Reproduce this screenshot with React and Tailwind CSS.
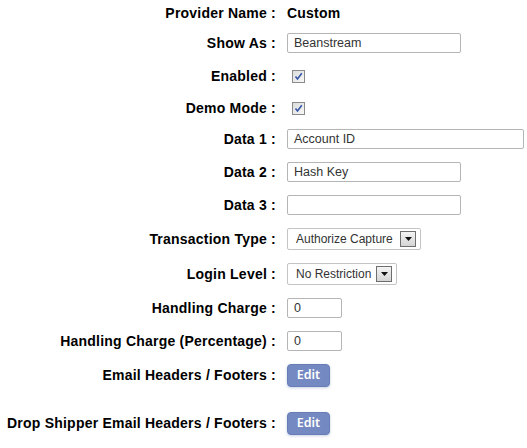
import React from "react";

const font = { fontFamily: '"Liberation Sans", Arial, sans-serif' };

function Label({ children }) {
  return (
    <div className="w-[276px] shrink-0 text-right text-[14px] tracking-[0.22px] font-bold text-black whitespace-nowrap">
      {children}
    </div>
  );
}

function Row({ h, label, children, extra = "" }) {
  return (
    <div className={`flex items-center ${h} ${extra}`}>
      <Label>{label}</Label>
      <div className="ml-[11px] flex items-center">{children}</div>
    </div>
  );
}

function TextInput({ w, value }) {
  return (
    <div
      className={`${w} h-[20px] border border-[#b5b5b5] rounded-[2px] bg-white flex items-center pl-[6px] text-[12.5px] text-[#333]`}
    >
      {value}
    </div>
  );
}

function Checkbox() {
  return (
    <div className="ml-[5px] w-[13px] h-[13px] border border-[#8a8a8a] bg-gradient-to-br from-[#dcdcdc] to-[#f8f8f8] flex items-center justify-center">
      <svg width="9" height="9" viewBox="0 0 9 9">
        <path d="M1.5 4.5 L3.5 7 L7.8 1.2" fill="none" stroke="#3555a5" strokeWidth="1.6" />
      </svg>
    </div>
  );
}

function Select({ w, value }) {
  return (
    <div
      className={`${w} h-[22px] border border-[#c4c4c4] rounded-[2px] bg-white flex items-center justify-between pl-[8px] pr-[4px] text-[12px] text-[#333]`}
    >
      <span className="whitespace-nowrap">{value}</span>
      <div className="w-[16px] h-[16px] shrink-0 border border-[#6e6e6e] bg-gradient-to-b from-[#f4f4f4] to-[#d4d4d4] flex items-center justify-center">
        <svg width="7" height="4" viewBox="0 0 7 4">
          <path d="M0 0 H7 L3.5 4 Z" fill="#111" />
        </svg>
      </div>
    </div>
  );
}

function EditButton() {
  return (
    <div
      className="w-[43px] h-[23px] rounded-[4px] bg-[#7489c1] border border-[#687db6] shadow-[0_1px_3px_rgba(100,120,180,0.35)] flex items-center justify-center text-white text-[12.5px] font-semibold"
      style={{ fontFamily: '"Noto Sans", "Open Sans", sans-serif' }}
    >
      Edit
    </div>
  );
}

export default function App() {
  return (
    <div className="w-[527px] h-[448px] bg-white overflow-hidden" style={font}>
      <Row h="h-[26px]" label="Provider Name :">
        <span className="text-[14px] tracking-[0.22px] font-bold text-black">Custom</span>
      </Row>
      <Row h="h-[34px]" label="Show As :">
        <TextInput w="w-[174px]" value="Beanstream" />
      </Row>
      <Row h="h-[32px]" label="Enabled :">
        <Checkbox />
      </Row>
      <Row h="h-[32px]" label="Demo Mode :">
        <Checkbox />
      </Row>
      <Row h="h-[30px]" label="Data 1 :">
        <TextInput w="w-[237px]" value="Account ID" />
      </Row>
      <Row h="h-[36px]" label="Data 2 :">
        <TextInput w="w-[174px]" value="Hash Key" />
      </Row>
      <Row h="h-[30px]" label="Data 3 :">
        <TextInput w="w-[174px]" value="" />
      </Row>
      <Row h="h-[38px]" label="Transaction Type :">
        <Select w="w-[134px]" value="Authorize Capture" />
      </Row>
      <Row h="h-[32px]" label="Login Level :">
        <Select w="w-[110px]" value="No Restriction" />
      </Row>
      <Row h="h-[36px]" label="Handling Charge :">
        <TextInput w="w-[55px]" value="0" />
      </Row>
      <Row h="h-[30px]" label="Handling Charge (Percentage) :">
        <TextInput w="w-[55px]" value="0" />
      </Row>
      <Row h="h-[39px]" label="Email Headers / Footers :">
        <EditButton />
      </Row>
      <Row h="h-[40px]" extra="pt-[17px]" label="Drop Shipper Email Headers / Footers :">
        <EditButton />
      </Row>
    </div>
  );
}
